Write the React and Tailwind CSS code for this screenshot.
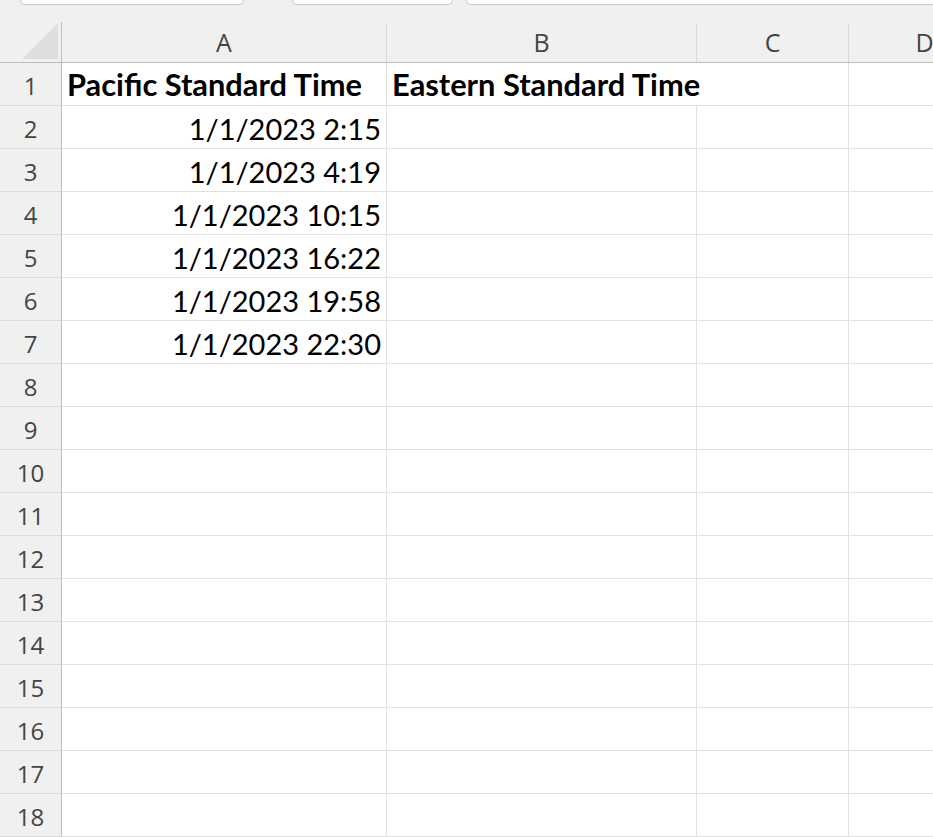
import React from "react";

const cols = [
  { name: "A", w: "w-[325px]" },
  { name: "B", w: "w-[310px]" },
  { name: "C", w: "w-[152px]" },
  { name: "D", w: "w-[152px]" },
];

const data = {
  1: ["Pacific Standard Time", "Eastern Standard Time"],
  2: ["1/1/2023 2:15"],
  3: ["1/1/2023 4:19"],
  4: ["1/1/2023 10:15"],
  5: ["1/1/2023 16:22"],
  6: ["1/1/2023 19:58"],
  7: ["1/1/2023 22:30"],
};

const rows = Array.from({ length: 18 }, (_, i) => i + 1);

export default function App() {
  return (
    <div className="w-[933px] h-[837px] overflow-hidden bg-[#f0f0f0] flex flex-col" style={{ fontFamily: "Lato, 'Open Sans', sans-serif" }}>
      {/* sheet tabs strip */}
      <div className="h-[22px] flex shrink-0">
        <div className="ml-[20px] w-[224px] h-[5px] bg-white border border-t-0 border-[#c8c8c8] rounded-b-[6px]"></div>
        <div className="ml-[48px] w-[161px] h-[5px] bg-white border border-t-0 border-[#c8c8c8] rounded-b-[6px]"></div>
        <div className="ml-[13px] flex-1 h-[5px] bg-white border border-t-0 border-r-0 border-[#c8c8c8] rounded-bl-[6px]"></div>
      </div>

      {/* column headers */}
      <div className="h-[41px] flex shrink-0 border-b border-[#bdbdbd]">
        <div className="w-[62px] shrink-0 border-r border-[#bdbdbd] flex items-end justify-end pr-[3px] pb-[3px] pt-[2px]">
          <svg width="36" height="36" viewBox="0 0 36 36">
            <polygon points="36,0 36,36 0,36" fill="#dedede" />
          </svg>
        </div>
        {cols.map((c) => (
          <div
            key={c.name}
            className={`${c.w} shrink-0 border-r border-[#d9d9d9] mt-[1px] flex items-center justify-center text-[25px] text-[#444444]`}
            style={{ fontFamily: "'Open Sans', 'Noto Sans', sans-serif" }}
          >
            {c.name}
          </div>
        ))}
      </div>

      {/* rows */}
      {rows.map((r) => {
        const vals = data[r] || [];
        const bold = r === 1;
        return (
          <div key={r} className="h-[43px] flex shrink-0">
            <div
              className="w-[62px] shrink-0 border-r border-[#bdbdbd] border-b border-b-[#dcdcdc] flex items-center justify-center pt-[3px] text-[24px] text-[#444444]"
              style={{ fontFamily: "'Open Sans', 'Noto Sans', sans-serif" }}
            >
              {r}
            </div>
            {cols.map((c, ci) => (
              <div
                key={c.name}
                className={`${c.w} shrink-0 bg-white border-r border-b border-[#e1e1e1] flex items-center whitespace-nowrap text-black pt-[3px] ${
                  bold ? "font-bold text-[30.8px] justify-start pl-[5px]" : "text-[29px] justify-end pr-[5px]"
                } ${bold && ci === 1 ? "border-r-white" : ""}`}
              >
                <span className="relative z-10">{vals[ci] || ""}</span>
              </div>
            ))}
          </div>
        );
      })}
    </div>
  );
}
